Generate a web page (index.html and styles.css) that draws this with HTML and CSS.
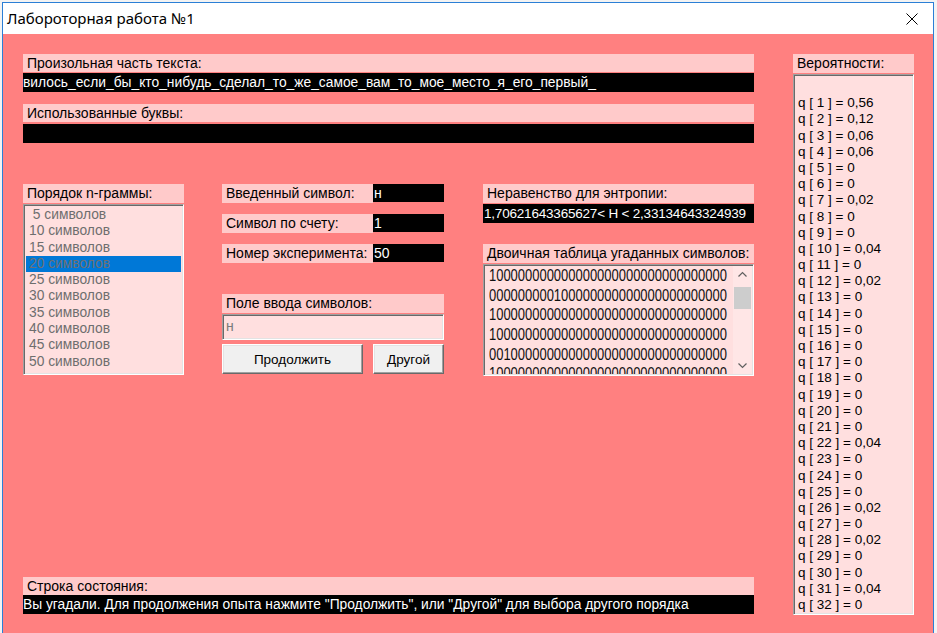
FILE: index.html
```html
<!DOCTYPE html>
<html lang="ru">
<head>
<meta charset="utf-8">
<title>Лабороторная работа №1</title>
<link rel="stylesheet" href="styles.css">
</head>
<body>
<div class="window">
  <div class="titlebar">
    <span class="title">Лабороторная работа №1</span>
    <svg class="close" width="12" height="12" viewBox="0 0 12 12"><path d="M0.5 0.5 L11.5 11.5 M11.5 0.5 L0.5 11.5" stroke="#000" stroke-width="1" fill="none"/></svg>
  </div>
  <div class="client">
    <div class="main">
      <div class="group">
        <div class="label">Произольная часть текста:</div>
        <div class="field wide">вилось_если_бы_кто_нибудь_сделал_то_же_самое_вам_то_мое_место_я_его_первый_</div>
      </div>
      <div class="group used">
        <div class="label">Использованные буквы:</div>
        <div class="field wide used-field"></div>
      </div>
      <div class="middle">
        <div class="col col-a">
          <div class="label tall">Порядок n-граммы:</div>
          <div class="listbox ngram">
            <div class="item">&nbsp;5 символов</div>
            <div class="item">10 символов</div>
            <div class="item">15 символов</div>
            <div class="item selected">20 символов</div>
            <div class="item">25 символов</div>
            <div class="item">30 символов</div>
            <div class="item">35 символов</div>
            <div class="item">40 символов</div>
            <div class="item">45 символов</div>
            <div class="item">50 символов</div>
          </div>
        </div>
        <div class="col col-b">
          <div class="pair">
            <div class="label tall pair-label">Введенный символ:</div>
            <div class="field small">н</div>
          </div>
          <div class="pair">
            <div class="label tall pair-label">Символ по счету:</div>
            <div class="field small">1</div>
          </div>
          <div class="pair">
            <div class="label tall pair-label">Номер эксперимента:</div>
            <div class="field small">50</div>
          </div>
          <div class="label tall input-label">Поле ввода символов:</div>
          <div class="input">н</div>
          <div class="buttons">
            <div class="button btn-continue">Продолжить</div>
            <div class="button btn-other">Другой</div>
          </div>
        </div>
        <div class="col col-c">
          <div class="label tall">Неравенство для энтропии:</div>
          <div class="field entropy">1,70621643365627&lt; H &lt; 2,33134643324939</div>
          <div class="label tall table-label">Двоичная таблица угаданных символов:</div>
          <div class="memo">
            <div class="memo-text">
              <div class="line">100000000000000000000000000000000</div>
              <div class="line">000000000100000000000000000000000</div>
              <div class="line">100000000000000000000000000000000</div>
              <div class="line">100000000000000000000000000000000</div>
              <div class="line">001000000000000000000000000000000</div>
              <div class="line">100000000000000000000000000000000</div>
            </div>
            <div class="scrollbar">
              <svg class="arrow" width="19" height="17" viewBox="0 0 19 17"><path d="M5.5 10.5 L9.5 6.5 L13.5 10.5" stroke="#606060" stroke-width="1.2" fill="none"/></svg>
              <div class="track"><div class="thumb"></div></div>
              <svg class="arrow" width="19" height="17" viewBox="0 0 19 17"><path d="M5.5 6.5 L9.5 10.5 L13.5 6.5" stroke="#606060" stroke-width="1.2" fill="none"/></svg>
            </div>
          </div>
        </div>
      </div>
      <div class="group status">
        <div class="label">Строка состояния:</div>
        <div class="field wide status-field">Вы угадали. Для продолжения опыта нажмите "Продолжить", или "Другой" для выбора другого порядка</div>
      </div>
    </div>
    <div class="side">
      <div class="label tall">Вероятности:</div>
      <div class="listbox probs">
        <div class="item">&nbsp;</div>
        <div class="item">q [ 1 ] = 0,56</div>
        <div class="item">q [ 2 ] = 0,12</div>
        <div class="item">q [ 3 ] = 0,06</div>
        <div class="item">q [ 4 ] = 0,06</div>
        <div class="item">q [ 5 ] = 0</div>
        <div class="item">q [ 6 ] = 0</div>
        <div class="item">q [ 7 ] = 0,02</div>
        <div class="item">q [ 8 ] = 0</div>
        <div class="item">q [ 9 ] = 0</div>
        <div class="item">q [ 10 ] = 0,04</div>
        <div class="item">q [ 11 ] = 0</div>
        <div class="item">q [ 12 ] = 0,02</div>
        <div class="item">q [ 13 ] = 0</div>
        <div class="item">q [ 14 ] = 0</div>
        <div class="item">q [ 15 ] = 0</div>
        <div class="item">q [ 16 ] = 0</div>
        <div class="item">q [ 17 ] = 0</div>
        <div class="item">q [ 18 ] = 0</div>
        <div class="item">q [ 19 ] = 0</div>
        <div class="item">q [ 20 ] = 0</div>
        <div class="item">q [ 21 ] = 0</div>
        <div class="item">q [ 22 ] = 0,04</div>
        <div class="item">q [ 23 ] = 0</div>
        <div class="item">q [ 24 ] = 0</div>
        <div class="item">q [ 25 ] = 0</div>
        <div class="item">q [ 26 ] = 0,02</div>
        <div class="item">q [ 27 ] = 0</div>
        <div class="item">q [ 28 ] = 0,02</div>
        <div class="item">q [ 29 ] = 0</div>
        <div class="item">q [ 30 ] = 0</div>
        <div class="item">q [ 31 ] = 0,04</div>
        <div class="item">q [ 32 ] = 0</div>
      </div>
    </div>
  </div>
</div>
</body>
</html>
```

FILE: styles.css
```css
html, body {
  margin: 0;
  padding: 0;
  height: 633px;
  overflow: hidden;
  background: #f3f3f3;
}

.window {
  margin: 2px 0 0 2px;
  width: 930px;
  height: 660px;
  border: 1px solid #2b7fd6;
  background: #ff8080;
  font-family: "Liberation Sans", Arial, sans-serif;
  font-size: 14px;
  color: #000;
}

.titlebar {
  height: 31px;
  background: #fff;
  display: flex;
  align-items: center;
  justify-content: space-between;
  padding: 0 15px 0 4px;
}

.title {
  font-family: "Noto Sans", "Open Sans", sans-serif;
  font-size: 15px;
  color: #000;
  margin-top: -1px;
}

.close {
  display: block;
  margin-top: 1px;
}

.client {
  display: flex;
  padding: 20px 0 0 20px;
  background: #ff8080;
}

.main {
  width: 731px;
  display: flex;
  flex-direction: column;
}

.label {
  background: #ffcaca;
  height: 18px;
  line-height: 18px;
  padding-left: 4px;
  white-space: nowrap;
  overflow: hidden;
}

.label.tall {
  height: 19px;
  line-height: 19px;
}

.field {
  background: #000;
  color: #fff;
  height: 19px;
  line-height: 19px;
  white-space: nowrap;
  overflow: hidden;
}

.field.wide {
  font-size: 13.8px;
}

.group .field.wide {
  margin-top: 1px;
}

.group.used {
  margin-top: 12px;
}

.group.used .used-field {
  margin-top: 2px;
}

.middle {
  display: flex;
  margin-top: 41px;
  height: 192px;
}

.col {
  display: flex;
  flex-direction: column;
}

.col-a {
  width: 161px;
}

.col-b {
  width: 222px;
  margin-left: 38px;
}

.col-c {
  width: 271px;
  margin-left: 39px;
}

.listbox {
  background: #ffdfdf;
  border-top: 1px solid #a0a0a0;
  border-left: 1px solid #a0a0a0;
  border-right: 1px solid #ffffff;
  border-bottom: 1px solid #ffffff;
  box-shadow: inset 1px 1px 0 #696969, inset -1px -1px 0 #e3e3e3;
  box-sizing: border-box;
  overflow: hidden;
}

.item {
  height: 16.3px;
  line-height: 16.3px;
  white-space: nowrap;
  flex: none;
}

.ngram {
  margin-top: 1px;
  height: 171px;
  flex: none;
  padding: 2px 2px 0 2px;
  color: #6e6e6e;
  font-size: 13.8px;
}

.ngram .item {
  padding-left: 3px;
}

.ngram .item.selected {
  background: #0078d7;
  color: #707070;
}

.pair {
  display: flex;
  height: 19px;
  flex: none;
  margin-bottom: 11px;
}

.pair-label {
  width: 151px;
  box-sizing: border-box;
}

.field.small {
  width: 71px;
  height: 18px;
  line-height: 18px;
  padding-left: 1px;
  box-sizing: border-box;
}

.input-label {
  margin-top: 20px;
  flex: none;
}

.input {
  margin-top: 1px;
  height: 26px;
  flex: none;
  line-height: 22px;
  box-sizing: border-box;
  background: #ffdfdf;
  border-top: 1px solid #a0a0a0;
  border-left: 1px solid #a0a0a0;
  border-right: 1px solid #ffffff;
  border-bottom: 1px solid #ffffff;
  box-shadow: inset 1px 1px 0 #696969, inset -1px -1px 0 #e3e3e3;
  padding-left: 3px;
  color: #7a7a7a;
}

.buttons {
  display: flex;
  gap: 10px;
  margin-top: 4px;
  flex: none;
}

.button {
  height: 30px;
  box-sizing: border-box;
  background: #f0f0f0;
  border-top: 1px solid #ffffff;
  border-left: 1px solid #ffffff;
  border-right: 1px solid #696969;
  border-bottom: 1px solid #696969;
  box-shadow: inset -1px -1px 0 #a0a0a0, inset 1px 1px 0 #e3e3e3;
  display: flex;
  align-items: center;
  justify-content: center;
  font-size: 13.5px;
}

.btn-continue {
  width: 141px;
}

.btn-other {
  width: 71px;
}

.field.entropy {
  margin-top: 1px;
  padding-left: 1px;
  font-size: 13.5px;
  letter-spacing: -0.2px;
  flex: none;
}

.table-label {
  margin-top: 21px;
  flex: none;
}

.memo {
  margin-top: 1px;
  height: 112px;
  flex: none;
  display: flex;
  box-sizing: border-box;
  background: #ffdfdf;
  border-top: 1px solid #a0a0a0;
  border-left: 1px solid #a0a0a0;
  border-right: 1px solid #ffffff;
  border-bottom: 1px solid #ffffff;
  box-shadow: inset 1px 1px 0 #696969, inset -1px -1px 0 #e3e3e3;
  padding: 1px;
  overflow: hidden;
}

.memo-text {
  flex: 1;
  overflow: hidden;
  padding-left: 4px;
}

.line {
  height: 19.7px;
  line-height: 19.7px;
  font-size: 16px;
  white-space: nowrap;
  transform: scaleX(0.81);
  transform-origin: left center;
  color: #111;
}

.scrollbar {
  width: 19px;
  display: flex;
  flex-direction: column;
  background: #ffe6e6;
}

.arrow {
  display: block;
  flex: none;
}

.track {
  flex: 1;
  padding-top: 4px;
}

.thumb {
  height: 22px;
  margin: 0 1px;
  background: #cdcdcd;
}

.group.status {
  margin-top: 201px;
}

.group.status .status-field {
  margin-top: 0;
}

.side {
  width: 121px;
  margin-left: 39px;
}

.probs {
  margin-top: 1px;
  height: 541px;
  padding: 4px 2px 0 4px;
  font-size: 13.5px;
}

.probs .item {
  height: 16.2px;
  line-height: 16.2px;
}
```
